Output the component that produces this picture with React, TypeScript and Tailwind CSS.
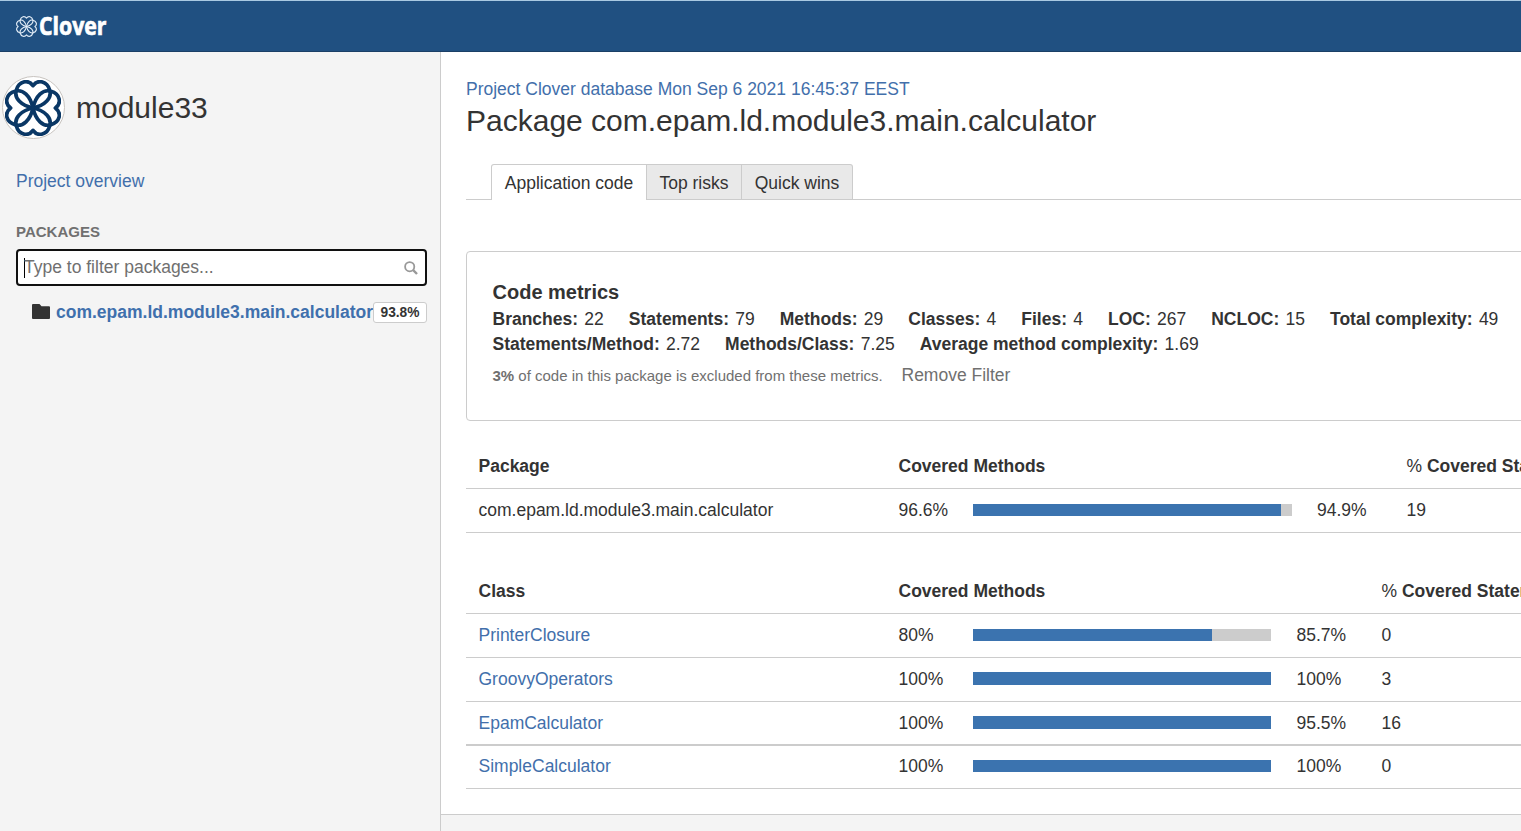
import React from "react";

const HEART =
  "M0 0 C36 -8 58 -30 50 -54 C43 -80 15 -88 0 -67 C-15 -88 -43 -80 -50 -54 C-58 -30 -36 -8 0 0 Z";

function CloverMark({ className, color, stroke }: { className: string; color: string; stroke: number }) {
  return (
    <svg viewBox="-84 -84 168 168" className={className} fill="none" stroke={color} strokeWidth={stroke} strokeLinejoin="round">
      <path d={HEART} />
      <path d={HEART} transform="rotate(90)" />
      <path d={HEART} transform="rotate(180)" />
      <path d={HEART} transform="rotate(270)" />
    </svg>
  );
}

function Bar({ value, className }: { value: number; className: string }) {
  return (
    <div className={`shrink-0 bg-[#cccccc] ${className}`}>
      <div className="h-full bg-[#3b73af]" style={{ width: `${value}%` }} />
    </div>
  );
}

function Metric({ label, value }: { label: string; value: string }) {
  return (
    <span className="whitespace-pre">
      <b>{label}:</b> <span className="ml-[1.4px]">{value}</span>
    </span>
  );
}

const row = "flex w-[1300px] items-center border-b border-[#cccccc] pl-[12.5px]";

const classes = [
  { name: "PrinterClosure", methods: "80%", value: 80.2, total: "85.7%", covered: "0", size: "h-[44px]", bar: "mb-[2px] h-[12px]" },
  { name: "GroovyOperators", methods: "100%", value: 100, total: "100%", covered: "3", size: "h-[44px]", bar: "mb-[2px] h-[13px]" },
  { name: "EpamCalculator", methods: "100%", value: 100, total: "95.5%", covered: "16", size: "h-[44px] border-b-2", bar: "mb-px h-[13px]" },
  { name: "SimpleCalculator", methods: "100%", value: 100, total: "100%", covered: "0", size: "h-[43px] pb-px", bar: "mb-[2px] h-[12px]" },
];

export default function App() {
  return (
    <div className="flex h-[831px] w-[1521px] flex-col overflow-hidden bg-[#f4f4f4] font-['Liberation_Sans',Arial,sans-serif] text-[17.5px] leading-[25px] text-[#333333]">
      <header className="flex h-[52px] shrink-0 items-center border-t border-b border-t-[#a9c9e2] border-b-[#1b3f66] bg-[#205081] pl-[15.5px]">
        <CloverMark className="size-[21px] shrink-0" color="#e4eef8" stroke={9} />
        <svg className="ml-px h-[36px] w-[76px]" viewBox="0 0 76 36">
          <text
            x="1"
            y="27"
            fill="#ffffff"
            stroke="#ffffff"
            strokeWidth="0.7"
            textLength="67.5"
            lengthAdjust="spacingAndGlyphs"
            className="font-['Open_Sans',sans-serif] text-[25px] font-bold"
          >
            Clover
          </text>
        </svg>
      </header>

      <div className="flex min-h-0 flex-1">
        <aside className="flex w-[441px] shrink-0 flex-col border-r border-[#cccccc]">
          <div className="mt-6 ml-[2px] flex h-[63px] items-center">
            <div className="flex size-[63px] items-center justify-center rounded-full border border-[#c8c4c0] bg-white">
              <CloverMark className="mr-px size-[56px]" color="#0a3765" stroke={11} />
            </div>
            <h1 className="ml-[11px] text-[30px] leading-[38px]">module33</h1>
          </div>
          <a className="mt-[30px] ml-4 text-[#426fab]">Project overview</a>
          <h2 className="mt-[28px] ml-4 text-[15px] leading-[20px] font-bold text-[#707070]">PACKAGES</h2>
          <div className="mt-[7px] ml-4 flex h-[37px] w-[411px] items-center rounded-[4px] border-2 border-[#101010] bg-white pr-[7px] pl-[6px] text-[#707070]">
            <span className="h-5 w-px bg-black" />
            <span className="-ml-px flex-1">Type to filter packages...</span>
            <svg viewBox="0 0 14 14" className="mt-px size-[14px]" fill="none" stroke="#999999">
              <circle cx="5.7" cy="5.7" r="4.6" strokeWidth="1.8" />
              <path d="M9.2 9.2 L13 13" strokeWidth="2.4" />
            </svg>
          </div>
          <div className="mt-[14px] ml-8 flex h-[25px] w-[395px] items-center">
            <svg viewBox="0 0 18 15" className="mb-[2px] h-[15px] w-[18px] shrink-0" fill="#333333">
              <path d="M0 1 Q0 0 1 0 H7.5 L9.5 2.2 H17 Q18 2.2 18 3.2 V14 Q18 15 17 15 H1 Q0 15 0 14 Z" />
            </svg>
            <a className="ml-[6px] w-[317px] font-bold whitespace-nowrap text-[#3f70ad]">com.epam.ld.module3.main.calculator</a>
            <span className="flex h-[21px] w-[54px] items-center justify-center rounded-[3px] border border-[#cccccc] bg-white text-[13.75px] font-bold">
              93.8%
            </span>
          </div>
        </aside>

        <div className="flex min-w-0 flex-1 flex-col overflow-hidden">
          <main className="flex h-[763px] shrink-0 flex-col overflow-hidden border-b border-[#cccccc] bg-white pl-[25px]">
            <a className="mt-[25px] text-[#426fab]">Project Clover database Mon Sep 6 2021 16:45:37 EEST</a>
            <h1 className="text-[30px] leading-[37px] whitespace-nowrap">Package com.epam.ld.module3.main.calculator</h1>

            <div className="mt-[25px] flex h-[36px] w-[1300px] shrink-0">
              <div className="w-[25px] border-b border-[#cccccc]" />
              <div className="flex w-[156px] items-center justify-center rounded-tl-[3px] border-t border-r border-l border-[#cccccc] bg-white pt-[2px]">
                Application code
              </div>
              <div className="flex w-[95px] items-center justify-center border-t border-r border-b border-[#cccccc] bg-[#e9e9e9] pt-[3px]">
                Top risks
              </div>
              <div className="flex w-[111px] items-center justify-center rounded-tr-[3px] border-t border-r border-b border-[#cccccc] bg-[#e9e9e9] pt-[3px]">
                Quick wins
              </div>
              <div className="flex-1 border-b border-[#cccccc]" />
            </div>

            <section className="mt-[51px] h-[170px] w-[1300px] shrink-0 rounded-[4px] border border-[#cccccc] pt-[27px] pl-[25.5px]">
              <h3 className="text-[20px] leading-[27px] font-bold">Code metrics</h3>
              <div className="mt-px flex gap-[25px]">
                <Metric label="Branches" value="22" />
                <Metric label="Statements" value="79" />
                <Metric label="Methods" value="29" />
                <Metric label="Classes" value="4" />
                <Metric label="Files" value="4" />
                <Metric label="LOC" value="267" />
                <Metric label="NCLOC" value="15" />
                <Metric label="Total complexity" value="49" />
              </div>
              <div className="flex gap-[25px]">
                <Metric label="Statements/Method" value="2.72" />
                <Metric label="Methods/Class" value="7.25" />
                <Metric label="Average method complexity" value="1.69" />
              </div>
              <div className="mt-[6px] flex items-baseline text-[#707070]">
                <span className="w-[409px] text-[15px]">
                  <b>3%</b> of code in this package is excluded from these metrics.
                </span>
                <span>Remove Filter</span>
              </div>
            </section>

            <section className="mt-[23px] shrink-0">
              <div className={`${row} h-[45px]`}>
                <b className="w-[420px]">Package</b>
                <b className="w-[508px]">Covered Methods</b>
                <span>
                  % <b>Covered Statements</b>
                </span>
              </div>
              <div className={`${row} h-[44px]`}>
                <span className="w-[420px]">com.epam.ld.module3.main.calculator</span>
                <span className="w-[74.5px]">96.6%</span>
                <Bar value={96.6} className="mb-[2px] h-[12px] w-[319px]" />
                <span className="ml-[25px] w-[89.5px]">94.9%</span>
                <span>19</span>
              </div>
            </section>

            <section className="mt-[36px] shrink-0">
              <div className={`${row} h-[45px]`}>
                <b className="w-[420px]">Class</b>
                <b className="w-[483px]">Covered Methods</b>
                <span>
                  % <b>Covered Statements</b>
                </span>
              </div>
              {classes.map((c) => (
                <div key={c.name} className={`${row} ${c.size}`}>
                  <a className="w-[420px] text-[#426fab]">{c.name}</a>
                  <span className="w-[74.5px]">{c.methods}</span>
                  <Bar value={c.value} className={`w-[298px] ${c.bar}`} />
                  <span className="ml-[25.5px] w-[85px]">{c.total}</span>
                  <span>{c.covered}</span>
                </div>
              ))}
            </section>
          </main>
        </div>
      </div>
    </div>
  );
}
